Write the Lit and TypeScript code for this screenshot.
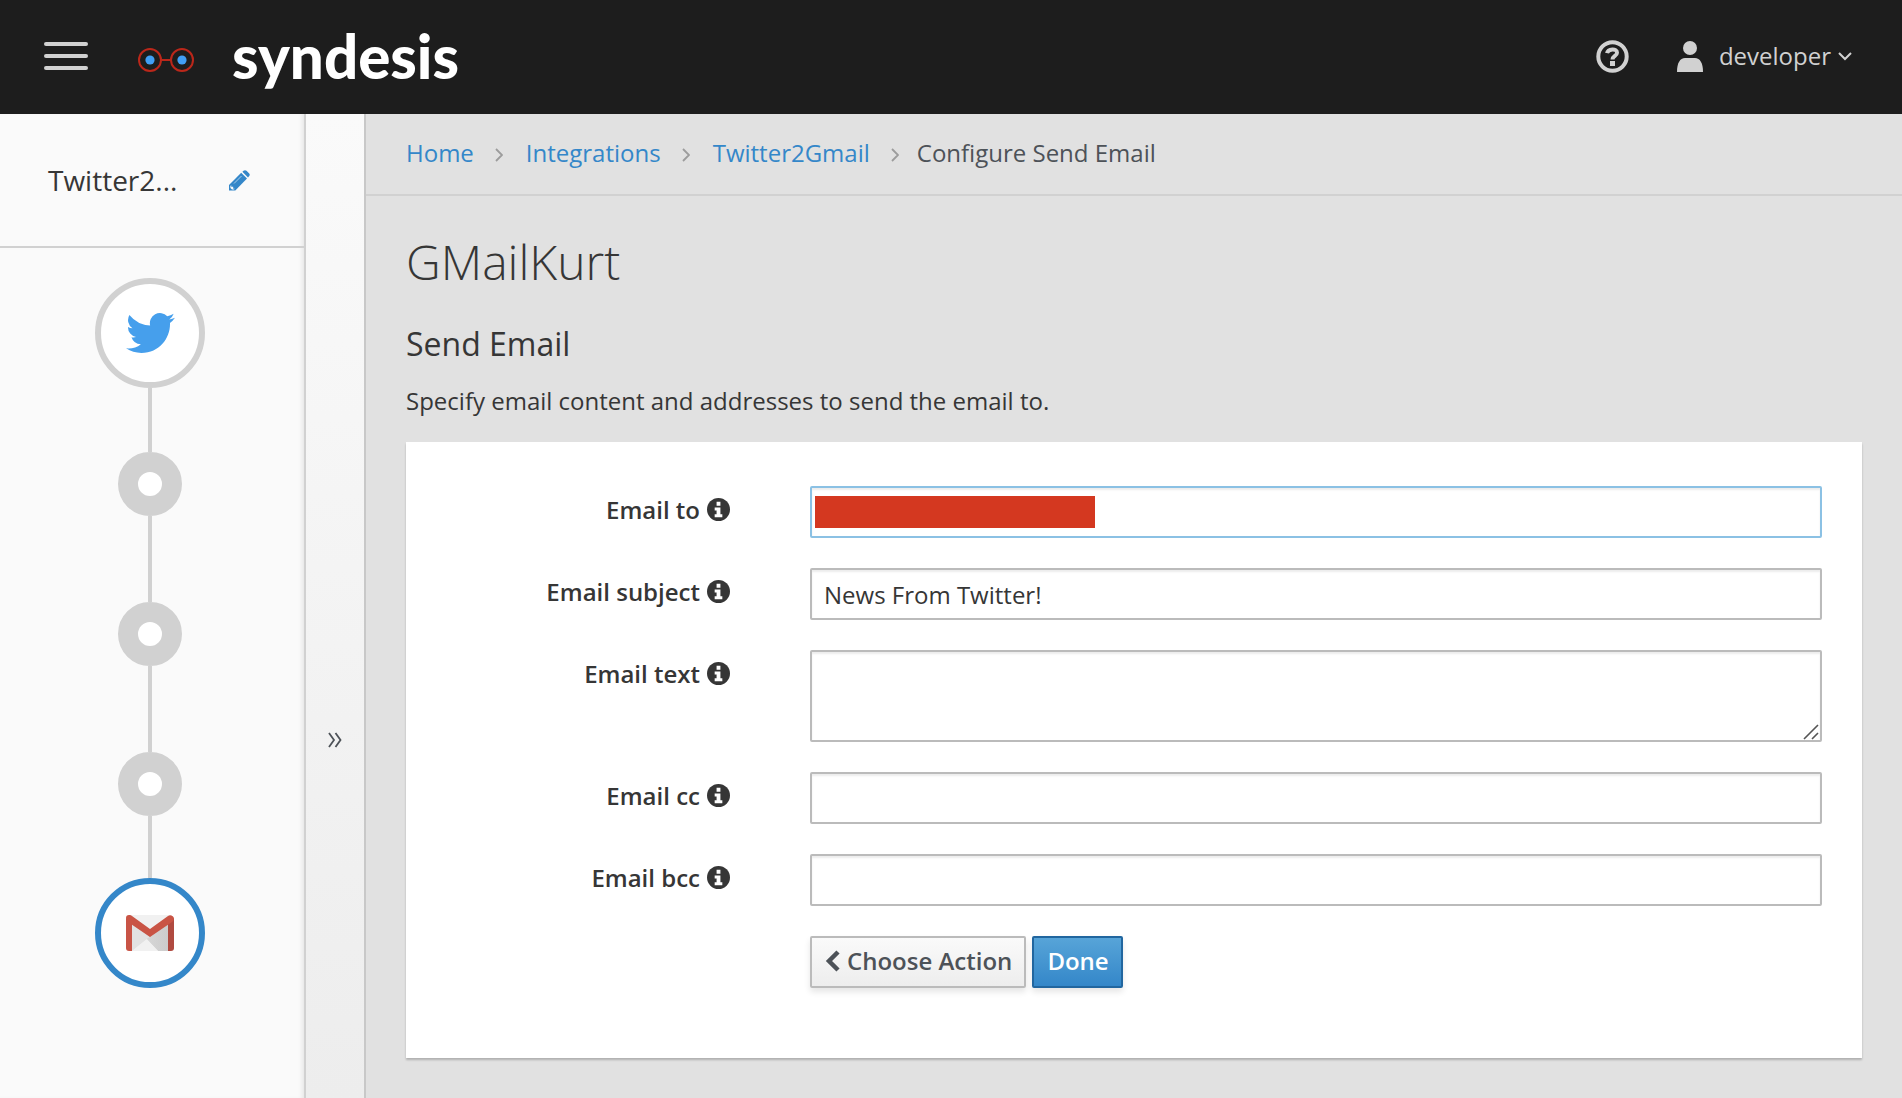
import { LitElement, html, css, svg, nothing } from "lit";
import { customElement } from "lit/decorators.js";

interface Field {
  id: string;
  label: string;
  value?: string;
  multiline?: boolean;
  redacted?: boolean;
}

const FIELDS: Field[] = [
  { id: "email-to", label: "Email to", redacted: true },
  { id: "email-subject", label: "Email subject", value: "News From Twitter!" },
  { id: "email-text", label: "Email text", multiline: true },
  { id: "email-cc", label: "Email cc" },
  { id: "email-bcc", label: "Email bcc" },
];

const CRUMBS = ["Home", "Integrations", "Twitter2Gmail"];

const infoIcon = svg`<svg class="info" viewBox="0 0 24 24" aria-hidden="true">
  <circle cx="12" cy="12" r="12" fill="currentColor"/>
  <path fill="#fff" d="M10 4h4v4h-4zM8 10h6v7h2v3H8v-3h2v-4H8z"/>
</svg>`;

const twitterIcon = svg`<svg width="49" height="40" viewBox="0 0 24 19.5" aria-hidden="true">
  <path fill="#469fec" d="M24 2.31a9.84 9.84 0 0 1-2.83.77A4.93 4.93 0 0 0 23.34.37a9.86 9.86 0 0 1-3.13 1.19A4.92 4.92 0 0 0 11.82 6.05 13.97 13.97 0 0 1 1.67.9 4.92 4.92 0 0 0 3.19 7.47 4.9 4.9 0 0 1 .96 6.85v.06a4.93 4.93 0 0 0 3.95 4.83 4.94 4.94 0 0 1-2.22.08 4.93 4.93 0 0 0 4.6 3.42A9.87 9.87 0 0 1 0 17.28a13.94 13.94 0 0 0 7.55 2.21c9.14 0 14.31-7.72 13.99-14.65A10.02 10.02 0 0 0 24 2.31z"/>
</svg>`;

const gmailIcon = svg`<svg width="48" height="36" viewBox="0 0 48 36" aria-hidden="true">
  <defs><linearGradient id="fold" x1="0" y1="0" x2="1" y2="0"><stop offset="0" stop-color="#dedede"/><stop offset="1" stop-color="#cccccc"/></linearGradient></defs>
  <path fill="#f1f1f1" d="M4 0h40v36H4z"/>
  <path fill="#e2e2e2" d="M6 8l15 16L6 36z"/>
  <path fill="url(#fold)" d="M6 8l26 28h10V8L24 21z"/>
  <path fill="#e2e2e2" d="M6 9l18 13-4 2L6 12z"/>
  <path fill="#f1f1f1" d="M6 36l14.500-11.500L32 36z"/>
  <path fill="#c85446" d="M0 3l6 5v28H3a3 3 0 0 1-3-3z"/>
  <path fill="#b04a40" d="M48 3l-6 5v28h3a3 3 0 0 0 3-3z"/>
  <path fill="#c95445" d="M3 0a4 4 0 0 1 3 1l18 13L42 1a4 4 0 0 1 6 2c0 2-1 3-2 4L24 22 2 7C1 6 0 5 0 3a3 3 0 0 1 3-3z"/>
</svg>`;

@customElement("app-root")
export class AppRoot extends LitElement {
  static styles = css`
    :host {
      display: flex;
      flex-direction: column;
      min-height: 100vh;
      background: #e1e1e1;
      color: #363636;
      font: 24px/40px "Open Sans", "Noto Sans", sans-serif;
    }
    *, *::before, *::after { box-sizing: border-box; }
    svg { display: block; flex: none; }
    a { color: #3487c9; text-decoration: none; }
    button { font: inherit; color: inherit; border: 0; margin: 0; padding: 0; background: none; cursor: pointer; }
    h1, h2, h3, p, ol { margin: 0; padding: 0; list-style: none; }

    .masthead {
      display: flex;
      align-items: center;
      height: 114px;
      padding: 0 50px 2px 44px;
      background: #1d1d1d;
      color: #d1d1d1;
    }
    .brand { display: flex; align-items: center; gap: 38px; margin-left: 50px; color: #fff; }
    .mark { margin-top: 8px; }
    .wordmark { font: 900 60px/64px Lato, "Open Sans", sans-serif; }
    .tools { display: flex; align-items: center; gap: 48px; margin-left: auto; }
    .user { display: flex; align-items: center; }
    .user-name { margin: 0 7px 0 16px; }

    .body { display: flex; flex: 1; }
    .sidebar {
      width: 306px;
      flex: none;
      background: #fafafa;
      border-right: 2px solid #d1d1d1;
      box-shadow: inset -4px 0 4px -2px rgba(3, 3, 3, 0.08);
    }
    .flow-head {
      display: flex;
      align-items: center;
      justify-content: space-between;
      height: 134px;
      padding: 0 54px 0 48px;
      border-bottom: 2px solid #d1d1d1;
    }
    .flow-name { font-size: 28px; font-weight: 400; line-height: 40px; }
    .steps { display: flex; flex-direction: column; align-items: center; width: 300px; padding-top: 30px; }
    .line { width: 4px; height: 64px; background: #d1d1d1; }
    .line.mid { height: 86px; }
    .line.end { height: 62px; }
    .node {
      display: grid;
      place-items: center;
      width: 110px;
      height: 110px;
      border: 6px solid #d1d1d1;
      border-radius: 50%;
      background: #fff;
    }
    .node.active { border-color: #3487c9; }
    .dot { width: 64px; height: 64px; border: 20px solid #d1d1d1; border-radius: 50%; background: #fff; }

    .toggle {
      display: grid;
      place-items: center;
      width: 60px;
      flex: none;
      color: #4d5258;
      background: linear-gradient(#fafafa, #ededed);
      border-right: 2px solid #c8c8c8;
    }
    .toggle svg { margin-top: 268px; }

    .main { flex: 1; min-width: 0; }
    .crumbs {
      display: flex;
      align-items: center;
      height: 82px;
      padding: 0 40px 2px;
      border-bottom: 2px solid #d1d1d1;
    }
    .crumbs li { display: flex; align-items: center; color: #4d5258; }
    .sep { margin: 4px 23px 0 21px; }
    .crumbs li:nth-last-child(2) .sep { margin-right: 18px; }
    .content { padding: 38px 40px 40px; }
    h1 { font-size: 48px; font-weight: 300; line-height: 56px; }
    h2 { margin-top: 36px; font-size: 32px; font-weight: 400; line-height: 36px; }
    .lead { margin-top: 19px; }
    .card {
      margin-top: 21px;
      padding: 44px 0 70px;
      background: #fff;
      box-shadow: 0 2px 2px rgba(3, 3, 3, 0.22);
    }
    .form { display: grid; gap: 30px; }
    .row { display: grid; grid-template-columns: 1fr 3fr; }
    .label { display: flex; justify-content: flex-end; gap: 7px; padding: 4px 40px 0; font-weight: 600; }
    .info { width: 23px; height: 23px; margin-top: 8px; }
    .control { display: flex; position: relative; padding: 0 40px; }
    .actions { grid-column: 2; display: flex; gap: 6px; padding: 0 40px; }
    .input {
      width: 100%;
      height: 52px;
      margin: 0;
      padding: 0 12px;
      font: inherit;
      color: #363636;
      background: #fff;
      border: 2px solid #bbb;
      border-radius: 2px;
      outline: none;
      box-shadow: inset 0 2px 2px rgba(3, 3, 3, 0.075);
    }
    .input.focused { border-color: #8bc1e4; }
    textarea.input { height: 92px; resize: none; }
    .redaction { position: absolute; left: 45px; top: 10px; width: 280px; height: 32px; background: #d43820; }
    .grip { position: absolute; right: 43px; bottom: 2px; }
    .btn {
      display: flex;
      align-items: center;
      height: 52px;
      padding: 0 12px 2px 13px;
      font-weight: 600;
      color: #4d5258;
      border: 2px solid #bbb;
      border-radius: 2px;
      background: linear-gradient(#fafafa, #ededed);
      box-shadow: 0 4px 6px rgba(3, 3, 3, 0.1);
    }
    .btn svg { margin-right: 7px; }
    .btn.primary { color: #fff; border-color: #21669f; background: linear-gradient(#57a4d8, #3487c9); }
  `;

  private field(f: Field) {
    return html`<div class="row">
      <label class="label" for=${f.id}>${f.label}${infoIcon}</label>
      <div class="control">
        ${f.multiline
          ? html`<textarea class="input" id=${f.id}></textarea>
              <svg class="grip" width="16" height="16" viewBox="0 0 16 16" fill="none" stroke="#555" stroke-width="1.6" aria-hidden="true"><path d="M1 15 15 1M9 15l6-6"/></svg>`
          : html`<input class="input ${f.redacted ? "focused" : ""}" id=${f.id} type="text" .value=${f.value ?? ""} />`}
        ${f.redacted ? html`<span class="redaction"></span>` : nothing}
      </div>
    </div>`;
  }

  render() {
    return html`
      <header class="masthead">
        <button aria-label="Menu">
          <svg width="44" height="28" viewBox="0 0 44 28" fill="#d1d1d1"><rect width="44" height="4" rx="2"/><rect y="12" width="44" height="4" rx="2"/><rect y="24" width="44" height="4" rx="2"/></svg>
        </button>
        <a class="brand" href="#">
          <svg class="mark" width="56" height="24" viewBox="0 0 56 24" fill="none" stroke="#bb271a" stroke-width="2" aria-hidden="true">
            <circle cx="12" cy="12" r="11"/><circle cx="44" cy="12" r="11"/><path d="M23 12h10"/>
            <g fill="#419ff5" stroke="none"><circle cx="12" cy="12" r="4.6"/><circle cx="44" cy="12" r="4.6"/></g>
          </svg>
          <span class="wordmark">syndesis</span>
        </a>
        <div class="tools">
          <button aria-label="Help">
            <svg width="33" height="33" viewBox="0 0 33 33" fill="none" stroke="#d1d1d1"><circle cx="16.500" cy="16.500" r="14.200" stroke-width="4"/><path stroke-width="4" d="M11 13.200C12 8.500 21 8 21 12.700c0 3.300-4.500 3-4.500 6.800"/><path stroke-width="5" d="M14 23.500h5"/></svg>
          </button>
          <button class="user">
            <svg width="26" height="31" viewBox="0 0 26 31" fill="#d1d1d1" aria-hidden="true"><circle cx="13" cy="7" r="7"/><path d="M0 31C0 22 3 17 8 17h10c5 0 8 5 8 14z"/></svg>
            <span class="user-name">developer</span>
            <svg width="14" height="9" viewBox="0 0 14 9" fill="none" stroke="#d1d1d1" stroke-width="2" aria-hidden="true"><path d="M1 1l6 6 6-6"/></svg>
          </button>
        </div>
      </header>
      <div class="body">
        <aside class="sidebar">
          <div class="flow-head">
            <h3 class="flow-name">Twitter2...</h3>
            <button aria-label="Edit name">
              <svg width="21" height="21" viewBox="0 0 21 21" fill="#3487c9"><path d="M12.200 2.800 18 8.600 6.300 20.500H0V15z"/><path d="M13.400 1.700 14.500.8q1.500-1.300 3 0l2.500 2.500q1.500 1.500 0 3l-1 1.200z"/><path d="M5 13.500 12.500 6" stroke="#a9cdea" stroke-width="1"/><path fill="#fafafa" d="M2.200 15v1.800h2v2h1.600L4.900 19.500H3L1.400 18v-2z"/></svg>
            </button>
          </div>
          <div class="steps">
            <div class="node">${twitterIcon}</div>
            <div class="line"></div>
            <div class="dot"></div>
            <div class="line mid"></div>
            <div class="dot"></div>
            <div class="line mid"></div>
            <div class="dot"></div>
            <div class="line end"></div>
            <div class="node active">${gmailIcon}</div>
          </div>
        </aside>
        <button class="toggle" aria-label="Expand panel">
          <svg width="14" height="16" viewBox="0 0 14 16" fill="none" stroke="currentColor" stroke-width="1.800"><path d="M1 1l5 7-5 7M7.500 1l5 7-5 7"/></svg>
        </button>
        <main class="main">
          <nav aria-label="Breadcrumb">
            <ol class="crumbs">
              ${CRUMBS.map((c) => html`<li><a href="#">${c}</a><svg class="sep" width="8" height="14" viewBox="0 0 8 14" fill="none" stroke="#9c9c9c" stroke-width="1.800" aria-hidden="true"><path d="M1 1l6 6-6 6"/></svg></li>`)}
              <li aria-current="page">Configure Send Email</li>
            </ol>
          </nav>
          <div class="content">
            <h1>GMailKurt</h1>
            <h2>Send Email</h2>
            <p class="lead">Specify email content and addresses to send the email to.</p>
            <section class="card">
              <form class="form">
                ${FIELDS.map((f) => this.field(f))}
                <div class="row">
                  <div class="actions">
                    <button class="btn" type="button">
                      <svg width="15" height="22" viewBox="0 0 15 22" fill="none" stroke="currentColor" stroke-width="4.500" aria-hidden="true"><path d="M13 2 4 11l9 9"/></svg>Choose Action
                    </button>
                    <button class="btn primary" type="button">Done</button>
                  </div>
                </div>
              </form>
            </section>
          </div>
        </main>
      </div>
    `;
  }
}
